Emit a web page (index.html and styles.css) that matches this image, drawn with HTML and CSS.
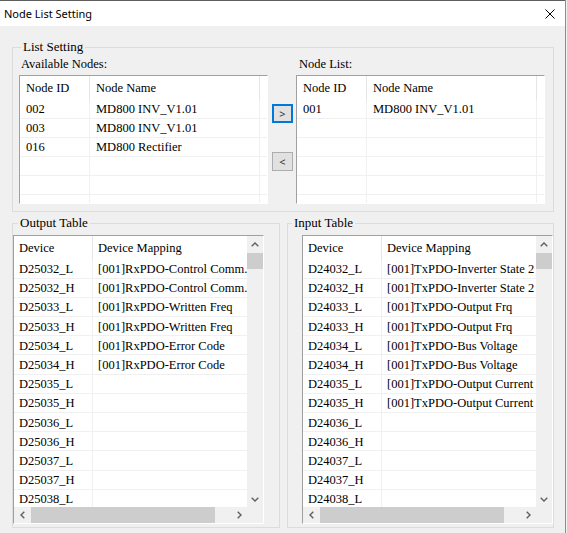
FILE: index.html
```html
<!DOCTYPE html>
<html lang="en">
<head>
  <meta charset="UTF-8">
  <title>Node List Setting</title>
  <link rel="stylesheet" href="styles.css">
</head>
<body>
  <div class="dialog">
    <div class="titlebar">
      <span class="title">Node List Setting</span>
      <svg class="close" width="10" height="10" viewBox="0 0 10 10">
        <path d="M0.5 0.5 L9.5 9.5 M9.5 0.5 L0.5 9.5" stroke="#000" stroke-width="1" fill="none"/>
      </svg>
    </div>

    <div class="content">
      <div class="group group-list">
        <div class="legend">List Setting</div>
        <div class="list-row">
          <div class="node-col">
            <div class="caption">Available Nodes:</div>
            <div class="listview">
              <div class="lv-row lv-head"><div class="cell c-id">Node ID</div><div class="cell c-name">Node Name</div><div class="cell c-fill"></div></div>
              <div class="lv-row"><div class="cell c-id">002</div><div class="cell c-name">MD800 INV_V1.01</div><div class="cell c-fill"></div></div>
              <div class="lv-row"><div class="cell c-id">003</div><div class="cell c-name">MD800 INV_V1.01</div><div class="cell c-fill"></div></div>
              <div class="lv-row"><div class="cell c-id">016</div><div class="cell c-name">MD800 Rectifier</div><div class="cell c-fill"></div></div>
              <div class="lv-row"><div class="cell c-id"></div><div class="cell c-name"></div><div class="cell c-fill"></div></div>
              <div class="lv-row"><div class="cell c-id"></div><div class="cell c-name"></div><div class="cell c-fill"></div></div>
              <div class="lv-row"><div class="cell c-id"></div><div class="cell c-name"></div><div class="cell c-fill"></div></div>
            </div>
          </div>

          <div class="move-btns">
            <button class="btn btn-default">&gt;</button>
            <button class="btn">&lt;</button>
          </div>

          <div class="node-col node-col-right">
            <div class="caption">Node List:</div>
            <div class="listview">
              <div class="lv-row lv-head"><div class="cell c-id">Node ID</div><div class="cell c-name">Node Name</div><div class="cell c-fill"></div></div>
              <div class="lv-row"><div class="cell c-id">001</div><div class="cell c-name">MD800 INV_V1.01</div><div class="cell c-fill"></div></div>
              <div class="lv-row"><div class="cell c-id"></div><div class="cell c-name"></div><div class="cell c-fill"></div></div>
              <div class="lv-row"><div class="cell c-id"></div><div class="cell c-name"></div><div class="cell c-fill"></div></div>
              <div class="lv-row"><div class="cell c-id"></div><div class="cell c-name"></div><div class="cell c-fill"></div></div>
              <div class="lv-row"><div class="cell c-id"></div><div class="cell c-name"></div><div class="cell c-fill"></div></div>
              <div class="lv-row"><div class="cell c-id"></div><div class="cell c-name"></div><div class="cell c-fill"></div></div>
            </div>
          </div>
        </div>
      </div>

      <div class="tables">
        <div class="group group-out">
          <div class="legend">Output Table</div>
          <div class="table-view">
            <div class="tv-rows">
              <div class="lv-row lv-head"><div class="cell t-dev">Device</div><div class="cell t-map">Device Mapping</div></div>
              <div class="lv-row"><div class="cell t-dev">D25032_L</div><div class="cell t-map">[001]RxPDO-Control Comm.</div></div>
              <div class="lv-row"><div class="cell t-dev">D25032_H</div><div class="cell t-map">[001]RxPDO-Control Comm.</div></div>
              <div class="lv-row"><div class="cell t-dev">D25033_L</div><div class="cell t-map">[001]RxPDO-Written Freq</div></div>
              <div class="lv-row"><div class="cell t-dev">D25033_H</div><div class="cell t-map">[001]RxPDO-Written Freq</div></div>
              <div class="lv-row"><div class="cell t-dev">D25034_L</div><div class="cell t-map">[001]RxPDO-Error Code</div></div>
              <div class="lv-row"><div class="cell t-dev">D25034_H</div><div class="cell t-map">[001]RxPDO-Error Code</div></div>
              <div class="lv-row"><div class="cell t-dev">D25035_L</div><div class="cell t-map"></div></div>
              <div class="lv-row"><div class="cell t-dev">D25035_H</div><div class="cell t-map"></div></div>
              <div class="lv-row"><div class="cell t-dev">D25036_L</div><div class="cell t-map"></div></div>
              <div class="lv-row"><div class="cell t-dev">D25036_H</div><div class="cell t-map"></div></div>
              <div class="lv-row"><div class="cell t-dev">D25037_L</div><div class="cell t-map"></div></div>
              <div class="lv-row"><div class="cell t-dev">D25037_H</div><div class="cell t-map"></div></div>
              <div class="lv-row"><div class="cell t-dev">D25038_L</div><div class="cell t-map"></div></div>
            </div>
            <div class="vscroll">
              <div class="sb-btn"><svg width="8" height="5" viewBox="0 0 8 5"><polyline points="0.7,4.3 4,1 7.3,4.3" fill="none" stroke="#606060" stroke-width="1.4"/></svg></div>
              <div class="sb-thumb-v"></div>
              <div class="sb-track"></div>
              <div class="sb-btn"><svg width="8" height="5" viewBox="0 0 8 5"><polyline points="0.7,0.7 4,4 7.3,0.7" fill="none" stroke="#606060" stroke-width="1.4"/></svg></div>
            </div>
            <div class="hscroll">
              <div class="sb-btn"><svg width="5" height="8" viewBox="0 0 5 8"><polyline points="4.3,0.7 1,4 4.3,7.3" fill="none" stroke="#606060" stroke-width="1.4"/></svg></div>
              <div class="sb-thumb-h"></div>
              <div class="sb-track"></div>
              <div class="sb-btn"><svg width="5" height="8" viewBox="0 0 5 8"><polyline points="0.7,0.7 4,4 0.7,7.3" fill="none" stroke="#606060" stroke-width="1.4"/></svg></div>
            </div>
            <div class="sb-corner"></div>
          </div>
        </div>

        <div class="group group-in">
          <div class="legend">Input Table</div>
          <div class="table-view">
            <div class="tv-rows">
              <div class="lv-row lv-head"><div class="cell t-dev">Device</div><div class="cell t-map">Device Mapping</div></div>
              <div class="lv-row"><div class="cell t-dev">D24032_L</div><div class="cell t-map">[001]TxPDO-Inverter State 2</div></div>
              <div class="lv-row"><div class="cell t-dev">D24032_H</div><div class="cell t-map">[001]TxPDO-Inverter State 2</div></div>
              <div class="lv-row"><div class="cell t-dev">D24033_L</div><div class="cell t-map">[001]TxPDO-Output Frq</div></div>
              <div class="lv-row"><div class="cell t-dev">D24033_H</div><div class="cell t-map">[001]TxPDO-Output Frq</div></div>
              <div class="lv-row"><div class="cell t-dev">D24034_L</div><div class="cell t-map">[001]TxPDO-Bus Voltage</div></div>
              <div class="lv-row"><div class="cell t-dev">D24034_H</div><div class="cell t-map">[001]TxPDO-Bus Voltage</div></div>
              <div class="lv-row"><div class="cell t-dev">D24035_L</div><div class="cell t-map">[001]TxPDO-Output Current</div></div>
              <div class="lv-row"><div class="cell t-dev">D24035_H</div><div class="cell t-map">[001]TxPDO-Output Current</div></div>
              <div class="lv-row"><div class="cell t-dev">D24036_L</div><div class="cell t-map"></div></div>
              <div class="lv-row"><div class="cell t-dev">D24036_H</div><div class="cell t-map"></div></div>
              <div class="lv-row"><div class="cell t-dev">D24037_L</div><div class="cell t-map"></div></div>
              <div class="lv-row"><div class="cell t-dev">D24037_H</div><div class="cell t-map"></div></div>
              <div class="lv-row"><div class="cell t-dev">D24038_L</div><div class="cell t-map"></div></div>
            </div>
            <div class="vscroll">
              <div class="sb-btn"><svg width="8" height="5" viewBox="0 0 8 5"><polyline points="0.7,4.3 4,1 7.3,4.3" fill="none" stroke="#606060" stroke-width="1.4"/></svg></div>
              <div class="sb-thumb-v"></div>
              <div class="sb-track"></div>
              <div class="sb-btn"><svg width="8" height="5" viewBox="0 0 8 5"><polyline points="0.7,0.7 4,4 7.3,0.7" fill="none" stroke="#606060" stroke-width="1.4"/></svg></div>
            </div>
            <div class="hscroll">
              <div class="sb-btn"><svg width="5" height="8" viewBox="0 0 5 8"><polyline points="4.3,0.7 1,4 4.3,7.3" fill="none" stroke="#606060" stroke-width="1.4"/></svg></div>
              <div class="sb-thumb-h"></div>
              <div class="sb-track"></div>
              <div class="sb-btn"><svg width="5" height="8" viewBox="0 0 5 8"><polyline points="0.7,0.7 4,4 0.7,7.3" fill="none" stroke="#606060" stroke-width="1.4"/></svg></div>
            </div>
            <div class="sb-corner"></div>
          </div>
        </div>
      </div>
    </div>
  </div>
</body>
</html>
```

FILE: styles.css
```css
* {
  box-sizing: border-box;
}

body {
  margin: 0;
  width: 567px;
  height: 533px;
  overflow: hidden;
  background: #f0f0f0;
  font-family: "Liberation Serif", "Times New Roman", serif;
  font-size: 12.5px;
  color: #000;
}

.dialog {
  width: 566px;
  height: 533px;
  border-right: 1px solid #8c8c8c;
}

.titlebar {
  height: 26px;
  background: #fff;
  border-top: 1px solid #5f5f5f;
  display: flex;
  align-items: center;
  padding-left: 4px;
  font-family: "Noto Sans", sans-serif;
  font-size: 11px;
}

.title {
  flex: 1;
}

.close {
  margin-right: 10px;
  display: block;
}

.content {
  padding: 21px 0 0 12px;
}

.group {
  border: 1px solid #dcdcdc;
}

.legend {
  width: fit-content;
  margin: -9px 0 0 8px;
  padding: 0 2px;
  line-height: 15px;
  font-size: 13px;
  background: #f0f0f0;
}

/* list setting */

.group-list {
  width: 542px;
  padding: 0 8px 7px 6px;
}

.group-list .legend {
  margin-left: 2px;
}

.list-row {
  display: flex;
}

.caption {
  margin: 2px 0 3px 2px;
  line-height: 16px;
  font-size: 12.5px;
}

.node-col-right {
  margin-left: 3px;
}

.node-col-right .caption {
  margin-left: 3px;
}

.listview {
  width: 249px;
  height: 129px;
  overflow: hidden;
  background: #fff;
  border: 1px solid;
  border-color: #a0a0a0 #fff #fff #a0a0a0;
}

.lv-row {
  display: flex;
  height: 19.2px;
  border-bottom: 1px solid #f0f0f0;
}

.lv-head {
  height: 23.5px;
  border-bottom: none;
}

.cell {
  white-space: nowrap;
  overflow: hidden;
  display: flex;
  align-items: center;
  padding: 2px 0 0 6px;
  border-right: 1px solid #f0f0f0;
  flex-shrink: 0;
}

.lv-head .cell {
  border-right-color: #e5e5e5;
}

.c-id {
  width: 70px;
}

.c-name {
  width: 170px;
}

.c-fill {
  flex: 1;
  border-right: none;
}

.move-btns {
  display: flex;
  flex-direction: column;
  gap: 29px;
  margin: 50px 0 0 4px;
}

.btn {
  width: 21px;
  height: 19px;
  padding: 0;
  border: 1px solid #adadad;
  background: #e1e1e1;
  font-family: "Noto Sans", sans-serif;
  font-size: 11px;
  line-height: 1;
  color: #333;
}

.btn-default {
  border: 2px solid #0078d7;
}

/* output / input tables */

.tables {
  display: flex;
  gap: 7px;
  margin-top: 11px;
}

.group-out {
  width: 268px;
  padding: 0 15px 3px 0;
}

.group-out .legend {
  margin-left: 5px;
}

.group-in {
  width: 267px;
  padding: 0 0 3px 0;
}

.group-in .legend {
  margin-left: 4px;
}

.group-in .table-view {
  margin-left: 14px;
}

.table-view {
  margin-top: 5px;
  width: 251px;
  height: 289px;
  background: #fff;
  border: 1px solid;
  border-color: #a0a0a0 #fff #fff #a0a0a0;
  display: grid;
  grid-template-columns: 1fr 16px;
  grid-template-rows: 1fr 16px;
}

.tv-rows {
  overflow: hidden;
  min-width: 0;
}

.tv-rows .cell {
  padding-left: 5px;
}

.t-dev {
  width: 79px;
}

.t-map {
  width: 180px;
  border-right: none;
}

.vscroll {
  background: #f0f0f0;
  display: flex;
  flex-direction: column;
}

.hscroll {
  background: #f0f0f0;
  display: flex;
}

.sb-btn {
  width: 16px;
  height: 16px;
  display: flex;
  align-items: center;
  justify-content: center;
  flex-shrink: 0;
}

.sb-track {
  flex: 1;
}

.sb-thumb-v {
  height: 16px;
  margin-top: 1px;
  background: #cdcdcd;
}

.sb-thumb-h {
  width: 184px;
  margin-left: 1px;
  background: #cdcdcd;
}

.sb-corner {
  background: #f0f0f0;
}
```
